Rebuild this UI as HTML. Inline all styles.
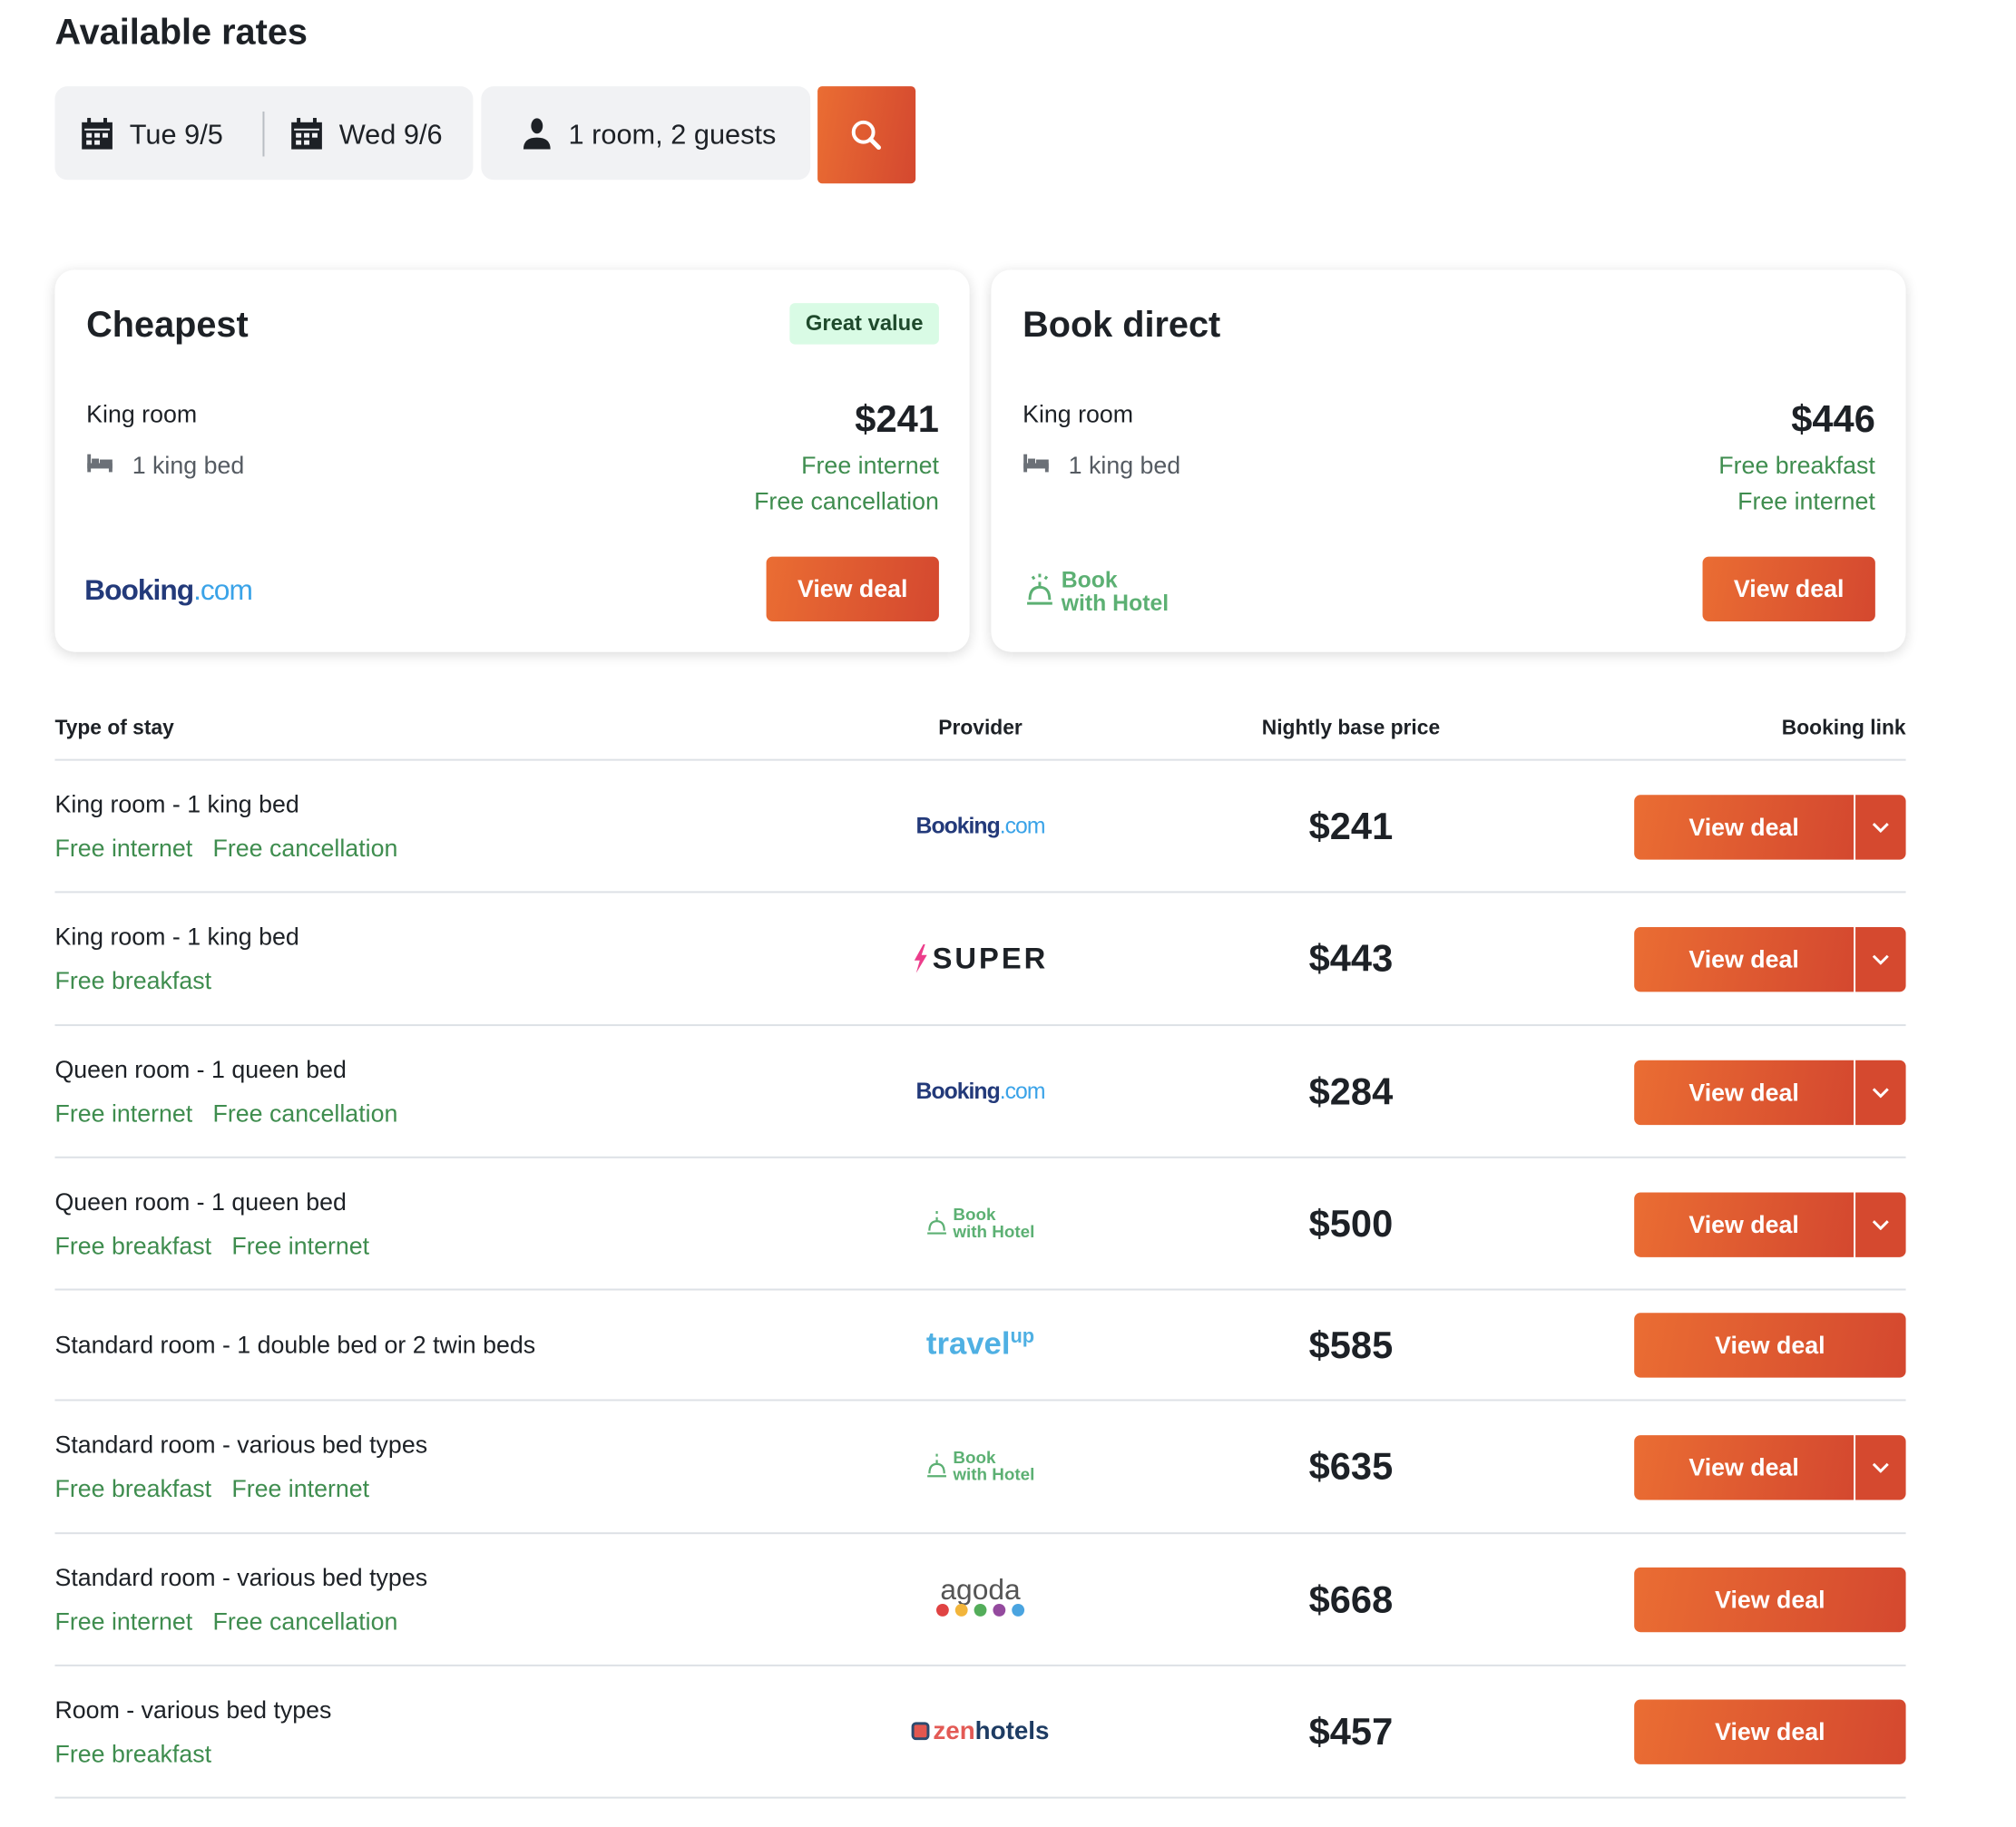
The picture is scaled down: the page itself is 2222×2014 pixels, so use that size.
<!DOCTYPE html>
<html><head><meta charset="utf-8"><style>
*{box-sizing:border-box;margin:0;padding:0}
body{width:2222px;height:2014px;background:#fff;font-family:"Liberation Sans",Arial,sans-serif;color:#1d2126;position:relative;overflow:hidden}
#w{position:absolute;left:0;top:0;width:2242px;height:2032px;transform:scale(0.9913);transform-origin:0 0}
.a{position:absolute}
.grad{background:linear-gradient(100deg,#ea6d33,#d4482f)}
.box{background:#f1f2f4;border-radius:14px}
.card{background:#fff;border-radius:22px;box-shadow:0 3px 14px rgba(0,0,0,.14)}
.vc{display:flex;align-items:center}
.green{color:#3f8d4f}
.btn{color:#fff;font-weight:bold;font-size:27px;border-radius:7px;display:flex;align-items:center;justify-content:center}
.line{height:2px;background:#dde1e6;left:61px;width:2058px}
.t{font-size:27px;transform:translateY(-50%)}
.price{font-weight:bold;font-size:42px;transform:translate(-50%,-50%);left:1502px}
.logo{transform:translate(-50%,-50%);left:1090px;white-space:nowrap}
.bk{font-weight:bold;font-size:25px;color:#233a7a;letter-spacing:-1px}
.bk span{color:#3aa3e8;font-weight:normal}
</style></head><body><div id="w">
<div class="a" style="left:61px;top:14px;font-size:40px;font-weight:bold">Available rates</div>

<div class="a box" style="left:61px;top:96px;width:465px;height:104px"></div>
<svg class="a" style="left:90px;top:131px" width="36" height="36" viewBox="0 0 36 36"><rect x="1" y="5" width="34" height="30" fill="#1d2126"/><rect x="7" y="0" width="4" height="8" fill="#1d2126"/><rect x="25" y="0" width="4" height="8" fill="#1d2126"/><rect x="4" y="12" width="28" height="2" fill="#f1f2f4"/><g fill="#f1f2f4"><rect x="6" y="17" width="6" height="5"/><rect x="15" y="17" width="6" height="5"/><rect x="24" y="17" width="6" height="5"/><rect x="6" y="25" width="6" height="5"/><rect x="15" y="25" width="6" height="5"/></g></svg>
<div class="a t" style="left:144px;top:150px;font-size:31px">Tue 9/5</div>
<div class="a" style="left:292px;top:124px;width:2px;height:50px;background:#b9bdc3"></div>
<svg class="a" style="left:323px;top:131px" width="36" height="36" viewBox="0 0 36 36"><rect x="1" y="5" width="34" height="30" fill="#1d2126"/><rect x="7" y="0" width="4" height="8" fill="#1d2126"/><rect x="25" y="0" width="4" height="8" fill="#1d2126"/><rect x="4" y="12" width="28" height="2" fill="#f1f2f4"/><g fill="#f1f2f4"><rect x="6" y="17" width="6" height="5"/><rect x="15" y="17" width="6" height="5"/><rect x="24" y="17" width="6" height="5"/><rect x="6" y="25" width="6" height="5"/><rect x="15" y="25" width="6" height="5"/></g></svg>
<div class="a t" style="left:377px;top:150px;font-size:31px">Wed 9/6</div>

<div class="a box" style="left:535px;top:96px;width:366px;height:104px"></div>
<svg class="a" style="left:579px;top:131px" width="36" height="36" viewBox="0 0 36 36"><ellipse cx="18" cy="9" rx="6.5" ry="8.5" fill="#1d2126"/><path d="M3 35 Q3 22 18 22 Q33 22 33 35 Z" fill="#1d2126"/></svg>
<div class="a t" style="left:632px;top:150px;font-size:31px">1 room, 2 guests</div>

<div class="a grad" style="left:909px;top:96px;width:109px;height:108px;border-radius:5px"></div>
<svg class="a" style="left:944px;top:131px" width="40" height="40" viewBox="0 0 40 40"><circle cx="16" cy="16" r="11" fill="none" stroke="#fff" stroke-width="4"/><line x1="24" y1="24" x2="33" y2="33" stroke="#fff" stroke-width="5" stroke-linecap="round"/></svg>

<div class="a card" style="left:61px;top:300px;width:1017px;height:425px"></div>
<div class="a t" style="left:96px;top:362px;font-size:40px;font-weight:bold">Cheapest</div>
<div class="a vc" style="left:878px;top:337px;width:166px;height:46px;background:#d9fbe5;border-radius:6px;justify-content:center;font-size:24px;font-weight:bold;color:#1f4a2c">Great value</div>
<div class="a t" style="left:96px;top:461px">King room</div>
<svg class="a" style="left:97px;top:505px" width="28" height="22" viewBox="0 0 28 22"><rect x="0" y="0" width="4" height="20" fill="#6b7077"/><rect x="0" y="10" width="28" height="6" fill="#6b7077"/><rect x="5" y="5" width="8" height="5" fill="#6b7077"/><rect x="14" y="6" width="14" height="4" fill="#6b7077"/><rect x="24" y="10" width="4" height="10" fill="#6b7077"/></svg>
<div class="a t" style="left:147px;top:518px;color:#555b62">1 king bed</div>
<div class="a" style="right:1198px;top:466px;transform:translateY(-50%);font-size:42px;font-weight:bold">$241</div>
<div class="a t green" style="right:1198px;top:518px">Free internet</div>
<div class="a t green" style="right:1198px;top:558px">Free cancellation</div>
<div class="a bk" style="left:94px;top:638px;font-size:32px">Booking<span>.com</span></div>
<div class="a btn grad" style="left:852px;top:619px;width:192px;height:72px">View deal</div>

<div class="a card" style="left:1102px;top:300px;width:1017px;height:425px"></div>
<div class="a t" style="left:1137px;top:362px;font-size:40px;font-weight:bold">Book direct</div>
<div class="a t" style="left:1137px;top:461px">King room</div>
<svg class="a" style="left:1138px;top:505px" width="28" height="22" viewBox="0 0 28 22"><rect x="0" y="0" width="4" height="20" fill="#6b7077"/><rect x="0" y="10" width="28" height="6" fill="#6b7077"/><rect x="5" y="5" width="8" height="5" fill="#6b7077"/><rect x="14" y="6" width="14" height="4" fill="#6b7077"/><rect x="24" y="10" width="4" height="10" fill="#6b7077"/></svg>
<div class="a t" style="left:1188px;top:518px;color:#555b62">1 king bed</div>
<div class="a" style="right:157px;top:466px;transform:translateY(-50%);font-size:42px;font-weight:bold">$446</div>
<div class="a t green" style="right:157px;top:518px">Free breakfast</div>
<div class="a t green" style="right:157px;top:558px">Free internet</div>
<svg class="a" style="left:1140px;top:637px" width="32" height="40" viewBox="0 0 32 40"><g stroke="#5cb073" stroke-width="3" fill="none"><path d="M5 30 Q5 16 16 16 Q27 16 27 30"/><line x1="2" y1="34" x2="30" y2="34"/><line x1="16" y1="10" x2="16" y2="16"/><line x1="16" y1="1" x2="16" y2="5"/><line x1="8" y1="4" x2="10" y2="7"/><line x1="24" y1="4" x2="22" y2="7"/></g></svg>
<div class="a" style="left:1180px;top:632px;font-size:25px;font-weight:bold;line-height:26px;color:#5cb073">Book<br>with Hotel</div>
<div class="a btn grad" style="left:1893px;top:619px;width:192px;height:72px">View deal</div>

<div class="a" style="left:61px;top:809px;transform:translateY(-50%);font-size:23px;font-weight:bold">Type of stay</div>
<div class="a" style="left:1090px;top:809px;transform:translate(-50%,-50%);font-size:23px;font-weight:bold">Provider</div>
<div class="a" style="left:1502px;top:809px;transform:translate(-50%,-50%);font-size:23px;font-weight:bold">Nightly base price</div>
<div class="a" style="right:123px;top:809px;transform:translateY(-50%);font-size:23px;font-weight:bold">Booking link</div>
<div class="a line" style="top:844px"></div>

<div class="a t" style="left:61px;top:895px">King room - 1 king bed</div>
<div class="a t green" style="left:61px;top:944px">Free internet&nbsp;&nbsp;&nbsp;Free cancellation</div>
<div class="a logo bk" style="top:919px">Booking<span>.com</span></div>
<div class="a price" style="top:919px">$241</div>
<div class="a btn grad" style="left:1817px;top:884px;width:244px;height:72px;border-radius:7px 0 0 7px">View deal</div>
<div class="a btn" style="left:2063px;top:884px;width:56px;height:72px;background:#d5492f;border-radius:0 7px 7px 0"><svg width="20" height="12" viewBox="0 0 20 12"><path d="M2 2 L10 10 L18 2" fill="none" stroke="#fff" stroke-width="3"/></svg></div>
<div class="a line" style="top:991px"></div>

<div class="a t" style="left:61px;top:1042px">King room - 1 king bed</div>
<div class="a t green" style="left:61px;top:1091px">Free breakfast</div>
<div class="a logo vc" style="top:1066px;font-size:33px;font-weight:bold;letter-spacing:3px;gap:4px"><svg width="18" height="32" viewBox="0 0 18 32"><path d="M12 0 L2 18 L8 18 L4 32 L16 12 L10 12 L14 0Z" fill="#ec3d8b"/></svg>SUPER</div>
<div class="a price" style="top:1066px">$443</div>
<div class="a btn grad" style="left:1817px;top:1031px;width:244px;height:72px;border-radius:7px 0 0 7px">View deal</div>
<div class="a btn" style="left:2063px;top:1031px;width:56px;height:72px;background:#d5492f;border-radius:0 7px 7px 0"><svg width="20" height="12" viewBox="0 0 20 12"><path d="M2 2 L10 10 L18 2" fill="none" stroke="#fff" stroke-width="3"/></svg></div>
<div class="a line" style="top:1139px"></div>

<div class="a t" style="left:61px;top:1190px">Queen room - 1 queen bed</div>
<div class="a t green" style="left:61px;top:1239px">Free internet&nbsp;&nbsp;&nbsp;Free cancellation</div>
<div class="a logo bk" style="top:1214px">Booking<span>.com</span></div>
<div class="a price" style="top:1214px">$284</div>
<div class="a btn grad" style="left:1817px;top:1179px;width:244px;height:72px;border-radius:7px 0 0 7px">View deal</div>
<div class="a btn" style="left:2063px;top:1179px;width:56px;height:72px;background:#d5492f;border-radius:0 7px 7px 0"><svg width="20" height="12" viewBox="0 0 20 12"><path d="M2 2 L10 10 L18 2" fill="none" stroke="#fff" stroke-width="3"/></svg></div>
<div class="a line" style="top:1286px"></div>

<div class="a t" style="left:61px;top:1337px">Queen room - 1 queen bed</div>
<div class="a t green" style="left:61px;top:1386px">Free breakfast&nbsp;&nbsp;&nbsp;Free internet</div>
<div class="a logo vc" style="top:1361px;gap:6px"><svg width="24" height="30" viewBox="0 0 32 40"><g stroke="#5cb073" stroke-width="3" fill="none"><path d="M5 30 Q5 16 16 16 Q27 16 27 30"/><line x1="2" y1="34" x2="30" y2="34"/><line x1="16" y1="10" x2="16" y2="16"/><line x1="16" y1="1" x2="16" y2="5"/></g></svg><div style="font-size:19px;font-weight:bold;line-height:19px;color:#5cb073">Book<br>with Hotel</div></div>
<div class="a price" style="top:1361px">$500</div>
<div class="a btn grad" style="left:1817px;top:1326px;width:244px;height:72px;border-radius:7px 0 0 7px">View deal</div>
<div class="a btn" style="left:2063px;top:1326px;width:56px;height:72px;background:#d5492f;border-radius:0 7px 7px 0"><svg width="20" height="12" viewBox="0 0 20 12"><path d="M2 2 L10 10 L18 2" fill="none" stroke="#fff" stroke-width="3"/></svg></div>
<div class="a line" style="top:1433px"></div>

<div class="a t" style="left:61px;top:1496px">Standard room - 1 double bed or 2 twin beds</div>
<div class="a logo" style="top:1494px;font-size:35px;font-weight:bold;color:#4fb0e3">travel<sup style="font-size:22px">up</sup></div>
<div class="a price" style="top:1496px">$585</div>
<div class="a btn grad" style="left:1817px;top:1460px;width:302px;height:72px">View deal</div>
<div class="a line" style="top:1556px"></div>

<div class="a t" style="left:61px;top:1607px">Standard room - various bed types</div>
<div class="a t green" style="left:61px;top:1656px">Free breakfast&nbsp;&nbsp;&nbsp;Free internet</div>
<div class="a logo vc" style="top:1631px;gap:6px"><svg width="24" height="30" viewBox="0 0 32 40"><g stroke="#5cb073" stroke-width="3" fill="none"><path d="M5 30 Q5 16 16 16 Q27 16 27 30"/><line x1="2" y1="34" x2="30" y2="34"/><line x1="16" y1="10" x2="16" y2="16"/><line x1="16" y1="1" x2="16" y2="5"/></g></svg><div style="font-size:19px;font-weight:bold;line-height:19px;color:#5cb073">Book<br>with Hotel</div></div>
<div class="a price" style="top:1631px">$635</div>
<div class="a btn grad" style="left:1817px;top:1596px;width:244px;height:72px;border-radius:7px 0 0 7px">View deal</div>
<div class="a btn" style="left:2063px;top:1596px;width:56px;height:72px;background:#d5492f;border-radius:0 7px 7px 0"><svg width="20" height="12" viewBox="0 0 20 12"><path d="M2 2 L10 10 L18 2" fill="none" stroke="#fff" stroke-width="3"/></svg></div>
<div class="a line" style="top:1704px"></div>

<div class="a t" style="left:61px;top:1755px">Standard room - various bed types</div>
<div class="a t green" style="left:61px;top:1804px">Free internet&nbsp;&nbsp;&nbsp;Free cancellation</div>
<div class="a logo" style="top:1778px;text-align:center"><div style="font-size:32px;color:#555;line-height:30px">agoda</div><svg width="100" height="16" viewBox="0 0 100 16"><circle cx="8" cy="8" r="7" fill="#e04343"/><circle cx="29" cy="8" r="7" fill="#f2b53b"/><circle cx="50" cy="8" r="7" fill="#53ad5a"/><circle cx="71" cy="8" r="7" fill="#944a9e"/><circle cx="92" cy="8" r="7" fill="#4aa4e0"/></svg></div>
<div class="a price" style="top:1779px">$668</div>
<div class="a btn grad" style="left:1817px;top:1743px;width:302px;height:72px">View deal</div>
<div class="a line" style="top:1851px"></div>

<div class="a t" style="left:61px;top:1902px">Room - various bed types</div>
<div class="a t green" style="left:61px;top:1951px">Free breakfast</div>
<div class="a logo vc" style="top:1925px;gap:4px"><div style="width:20px;height:20px;border-radius:5px;background:#e3574f;border:3px solid #2c4a6e"></div><span style="font-size:28px;font-weight:bold;color:#e35a55">zen</span><span style="font-size:28px;font-weight:bold;color:#1e3c63;margin-left:-4px">hotels</span></div>
<div class="a price" style="top:1926px">$457</div>
<div class="a btn grad" style="left:1817px;top:1890px;width:302px;height:72px">View deal</div>
<div class="a line" style="top:1998px"></div>
</div></body></html>
